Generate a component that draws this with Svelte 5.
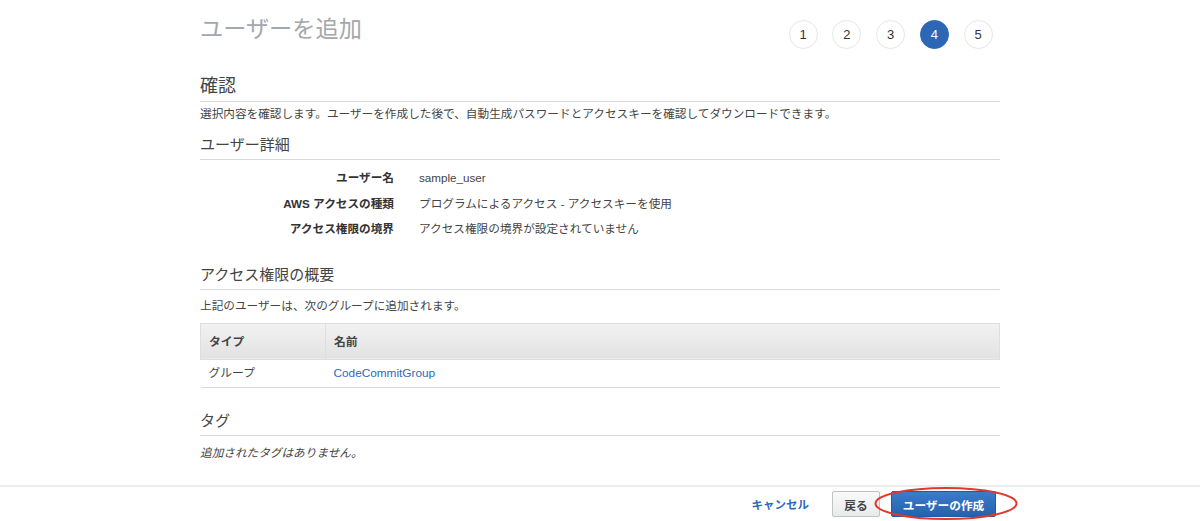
<script>
  const steps = [1, 2, 3, 4, 5];
  const current = 4;

  const details = [
    { label: 'ユーザー名', value: 'sample_user' },
    { label: 'AWS アクセスの種類', value: 'プログラムによるアクセス - アクセスキーを使用' },
    { label: 'アクセス権限の境界', value: 'アクセス権限の境界が設定されていません' }
  ];
</script>

<div class="page">
  <main class="wizard">
    <header class="top">
      <h1>ユーザーを追加</h1>
      <ol class="steps">
        {#each steps as step}
          <li class:active={step === current}>{step}</li>
        {/each}
      </ol>
    </header>

    <h2 class="review-title">確認</h2>
    <p class="intro">選択内容を確認します。ユーザーを作成した後で、自動生成パスワードとアクセスキーを確認してダウンロードできます。</p>

    <h3 class="details-title">ユーザー詳細</h3>
    <dl class="details">
      {#each details as row}
        <dt>{row.label}</dt>
        <dd>{row.value}</dd>
      {/each}
    </dl>

    <h3 class="perm-title">アクセス権限の概要</h3>
    <p class="perm-text">上記のユーザーは、次のグループに追加されます。</p>
    <table>
      <thead>
        <tr>
          <th class="type">タイプ</th>
          <th>名前</th>
        </tr>
      </thead>
      <tbody>
        <tr>
          <td class="kind">グループ</td>
          <td><a href="#group">CodeCommitGroup</a></td>
        </tr>
      </tbody>
    </table>

    <h3 class="tag-title">タグ</h3>
    <p class="no-tags">追加されたタグはありません。</p>
  </main>

  <footer class="actions">
    <a class="cancel" href="#cancel">キャンセル</a>
    <button class="back" type="button">戻る</button>
    <span class="create-wrap">
      <button class="create" type="button">ユーザーの作成</button>
      <svg class="ring" width="146" height="36" viewBox="0 0 146 36" aria-hidden="true">
        <ellipse cx="73" cy="17.5" rx="70.5" ry="15.5" fill="none" stroke="#e0392b" stroke-width="2" />
      </svg>
    </span>
  </footer>
</div>

<style>
  :global(body) {
    margin: 0;
    background: #fff;
    font-family: "Liberation Sans", "Noto Sans CJK JP", sans-serif;
    color: #444;
  }

  .page {
    height: 521px;
    overflow: hidden;
    display: flex;
    flex-direction: column;
  }

  .wizard {
    width: 800px;
    margin: 0 auto;
    flex: 1;
  }

  .top {
    display: flex;
    justify-content: space-between;
    height: 72px;
  }

  h1 {
    margin: 14px 0 0;
    font-size: 23.2px;
    line-height: 30px;
    font-weight: 400;
    color: #a3a8ab;
  }

  .steps {
    list-style: none;
    margin: 20px 7.5px 0 0;
    padding: 0;
    display: flex;
    gap: 14.75px;
  }

  .steps li {
    box-sizing: border-box;
    width: 29px;
    height: 29px;
    border: 1px solid #e4e6e6;
    border-radius: 50%;
    background: #fff;
    color: #333;
    font-size: 13px;
    line-height: 28px;
    text-align: center;
  }

  .steps li.active {
    background: #2b67b5;
    border-color: #2b67b5;
    color: #fff;
  }

  h2,
  h3 {
    margin: 0;
    font-weight: 400;
    color: #444;
    border-bottom: 1px solid #d5dbdb;
  }

  .review-title {
    font-size: 18px;
    line-height: 28px;
    height: 29px;
  }

  h3 {
    font-size: 15px;
    line-height: 22px;
  }

  p {
    margin: 0;
    font-size: 11.65px;
    line-height: 18px;
    color: #444;
  }

  .intro {
    margin-top: 3px;
  }

  .details-title {
    margin-top: 11px;
    padding-bottom: 3px;
  }

  .details {
    margin: 5px 0 0;
    display: grid;
    grid-template-columns: 194px 1fr;
    column-gap: 25px;
    font-size: 11.65px;
    line-height: 25.5px;
  }

  dt {
    font-weight: 700;
    text-align: right;
    color: #333;
  }

  dd {
    margin: 0;
    color: #444;
  }

  .perm-title {
    margin-top: 22px;
    padding-bottom: 3px;
  }

  .perm-text {
    margin-top: 7px;
  }

  table {
    width: 100%;
    margin-top: 8px;
    border-collapse: collapse;
    font-size: 11.8px;
    border-bottom: 1px solid #d5dbdb;
  }

  th {
    box-sizing: border-box;
    height: 36px;
    padding: 0 8px 2px;
    text-align: left;
    font-weight: 700;
    color: #444;
    background: linear-gradient(#f2f2f2, #e2e2e2);
    border: 1px solid #dcdfe0;
  }

  th.type {
    width: 125px;
  }

  td {
    box-sizing: border-box;
    height: 28px;
    padding: 0 8px;
    color: #444;
  }

  td.kind {
    padding-bottom: 3px;
  }

  a {
    color: #2a6ac2;
    text-decoration: none;
  }

  .tag-title {
    margin-top: 22px;
    padding-bottom: 3px;
  }

  .no-tags {
    margin-top: 8px;
    font-style: italic;
  }

  .actions {
    height: 34px;
    border-top: 2px solid #eaeded;
    display: flex;
    align-items: center;
    justify-content: flex-end;
    padding: 0 204px 0 0;
  }

  .cancel {
    font-size: 11.5px;
    font-weight: 700;
    color: #2a6ac2;
    margin-right: 23px;
  }

  button {
    font-family: inherit;
    font-size: 11.7px;
    font-weight: 700;
    height: 26px;
    border-radius: 2px;
    cursor: pointer;
    padding: 0;
  }

  .back {
    width: 48px;
    margin-right: 11px;
    color: #444;
    background: linear-gradient(#f9f9f9, #e9ebeb);
    border: 1px solid #c0c4c4;
  }

  .create-wrap {
    position: relative;
    display: inline-flex;
  }

  .create {
    width: 105px;
    color: #fff;
    background: linear-gradient(#3a7ccb, #2661ad);
    border: 1px solid #1f5aa6;
  }

  .ring {
    position: absolute;
    left: -18px;
    top: -5px;
    pointer-events: none;
  }
</style>
